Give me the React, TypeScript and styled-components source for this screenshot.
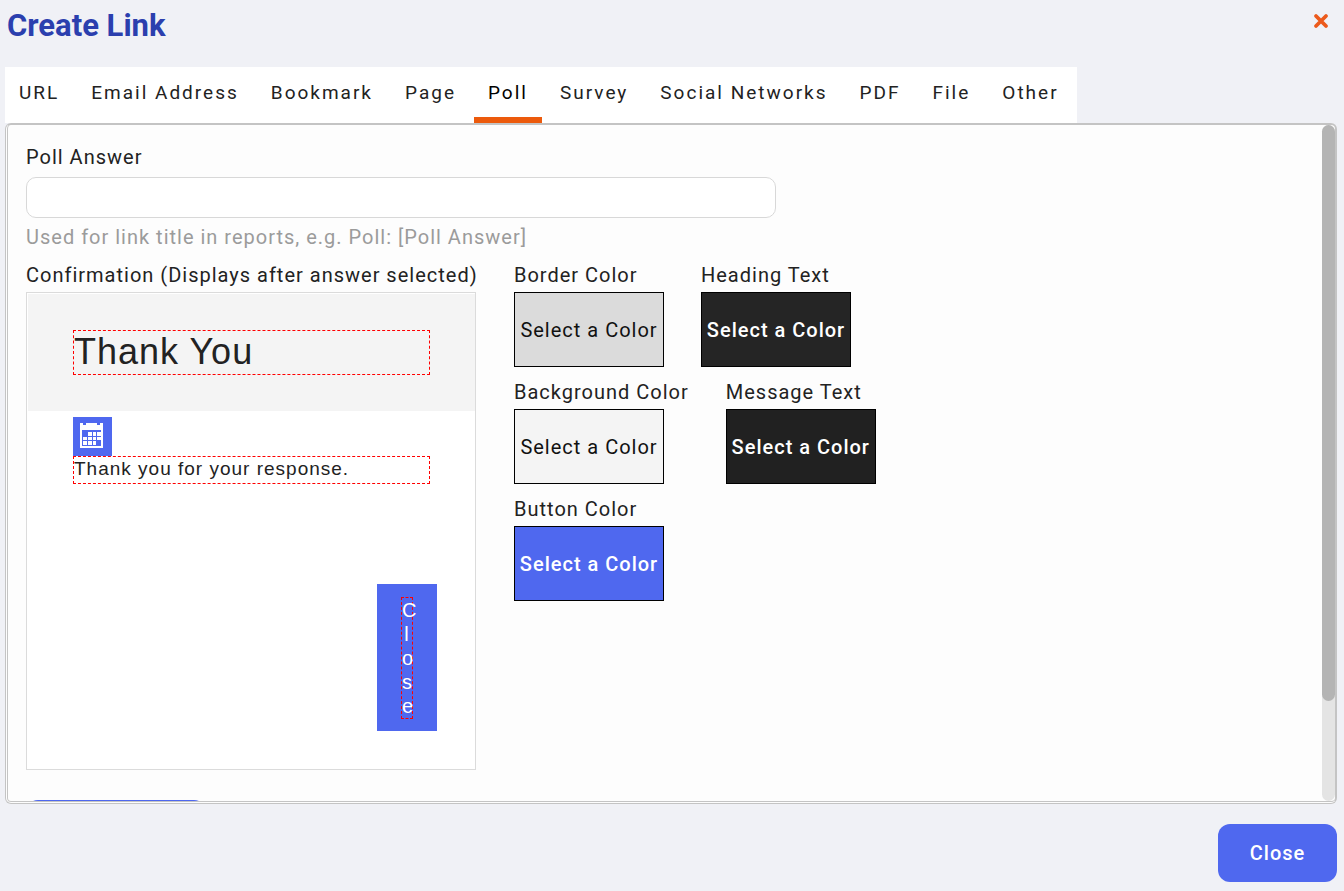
import React, { useEffect, useRef, useState } from "react";
import styled, { createGlobalStyle } from "styled-components";

const sans = `Roboto, "Liberation Sans", sans-serif`;
const arial = `"Liberation Sans", Arial, sans-serif`;
const blue = "#4f68ef";

const GlobalStyle = createGlobalStyle`
  *, *::before, *::after { box-sizing: border-box; }
  body { margin: 0; background: #f0f1f6; color: #222; font: 400 20px/24px ${sans}; letter-spacing: 1px; }
  button, input { font: inherit; letter-spacing: inherit; color: inherit; }
  button { cursor: pointer; }
`;

const Dialog = styled.main`
  display: flex;
  flex-direction: column;
  height: 100vh;
  padding: 6px 7px 9px 5px;
`;

const Header = styled.header`
  display: flex;
  justify-content: space-between;
  align-items: flex-start;
  height: 61px;
  flex: none;
  padding: 0 6px 0 2px;
`;

const Title = styled.h1`
  margin: 0;
  font-size: 31px;
  line-height: 40px;
  font-weight: 700;
  letter-spacing: 0;
  color: #2b3fae;
`;

const DismissButton = styled.button`
  display: flex;
  padding: 5px 0;
  border: 0;
  background: none;
`;

const TabList = styled.div`
  display: flex;
  flex: none;
  align-self: flex-start;
  gap: 4px;
  height: 56px;
  padding-right: 4px;
  background: #fff;
`;

const Tab = styled.button<{ $active: boolean }>`
  padding: 1px 14px 0;
  border: 0;
  border-bottom: 6px solid ${(p) => (p.$active ? "#ec5a0c" : "transparent")};
  background: none;
  color: ${(p) => (p.$active ? "#000" : "#222")};
  font-size: 19px;
  letter-spacing: 2px;
  white-space: nowrap;
`;

const Panel = styled.section`
  display: flex;
  flex: 1;
  min-height: 0;
  border: 3px double #c4c4c4;
  border-top-width: 2px;
  border-right-width: 2px;
  border-radius: 6px;
  background: #fdfdfd;
  overflow: hidden;
`;

const ScrollArea = styled.div`
  flex: 1;
  min-width: 0;
  overflow-y: auto;
  scrollbar-width: none;
  padding: 20px 18px 60px;
`;

const Track = styled.div`
  flex: none;
  width: 13px;
  border-radius: 7px;
  background: #e4e4e4;
`;

const Thumb = styled.div`
  border-radius: 7px;
  background: #b4b4b4;
`;

const Label = styled.label`
  display: block;
  white-space: nowrap;
`;

const TextInput = styled.input`
  display: block;
  width: 750px;
  max-width: 100%;
  height: 41px;
  margin: 8px 0 7px;
  padding: 0 12px;
  border: 1px solid #d8d8d8;
  border-radius: 10px;
  background: #fff;
`;

const Hint = styled.p`
  margin: 0 0 14px;
  color: #9b9b9b;
`;

const Columns = styled.div`
  display: flex;
  gap: 38px;
`;

const PreviewColumn = styled.div`
  flex: none;
  width: 450px;
`;

const Preview = styled.div`
  height: 478px;
  margin-top: 5px;
  border: 1px solid #dbdbdb;
  background: #fff;
  font-family: ${arial};
`;

const PreviewHead = styled.div`
  height: 117px;
  margin: 1px 0 6px 1px;
  padding: 36px 45px;
  background: #f4f4f4;
`;

const EditableHeading = styled.h2`
  margin: 0;
  border: 1px dashed #f00;
  height: 45px;
  font-size: 36px;
  line-height: 41px;
  font-weight: 400;
`;

const IconTile = styled.div`
  display: flex;
  justify-content: center;
  width: 39px;
  height: 39px;
  padding: 5px 2px 0 0;
  margin-left: 46px;
  background: ${blue};
`;

const EditableText = styled.p`
  margin: 0 45px 100px 46px;
  border: 1px dashed #f00;
  height: 28px;
  font-size: 19px;
`;

const PreviewButton = styled.button`
  display: block;
  width: 60px;
  height: 147px;
  margin: 0 38px 0 auto;
  padding: 0 24px;
  border: 0;
  background: ${blue};
  color: #fff;
`;

const EditableLetters = styled.span`
  display: block;
  width: 12px;
  border: 1px dashed #f00;
  text-align: center;
  word-break: break-all;
`;

const Swatches = styled.div`
  display: flex;
  flex-direction: column;
  gap: 13px;
`;

const SwatchRow = styled.div`
  display: flex;
  gap: 37px;
`;

const SwatchCell = styled.div`
  min-width: 150px;
`;

const SwatchButton = styled.button<{ $fill: string; $light: boolean }>`
  display: block;
  width: 150px;
  height: 75px;
  margin-top: 5px;
  padding: 0;
  border: 1px solid #000;
  background: ${(p) => p.$fill};
  color: ${(p) => (p.$light ? "#fff" : "#111")};
  font-weight: ${(p) => (p.$light ? 500 : 400)};
  white-space: nowrap;
`;

const SaveButton = styled.button`
  display: block;
  width: 180px;
  height: 58px;
  margin-top: 30px;
  border: 0;
  border-radius: 12px;
  background: ${blue};
  color: #fff;
`;

const Footer = styled.footer`
  display: flex;
  justify-content: flex-end;
  flex: none;
  padding-top: 20px;
`;

const CloseButton = styled.button`
  width: 119px;
  height: 58px;
  border: 0;
  border-radius: 12px;
  background: ${blue};
  color: #fff;
  font-weight: 500;
`;

const tabs = ["URL", "Email Address", "Bookmark", "Page", "Poll", "Survey", "Social Networks", "PDF", "File", "Other"];

const swatchRows = [
  [
    { id: "border", label: "Border Color", fill: "#dbdbdb", light: false },
    { id: "heading", label: "Heading Text", fill: "#252525", light: true },
  ],
  [
    { id: "background", label: "Background Color", fill: "#f4f4f4", light: false },
    { id: "message", label: "Message Text", fill: "#212121", light: true },
  ],
  [{ id: "button", label: "Button Color", fill: blue, light: true }],
];

const CloseIcon = () => (
  <svg width="20" height="20" viewBox="0 0 20 20" aria-hidden="true">
    <path d="M5 5L15 15M15 5L5 15" stroke="#ec5a1c" strokeWidth="3.8" strokeLinecap="round" />
  </svg>
);

const CalendarIcon = () => (
  <svg width="25" height="27" viewBox="0 0 25 27" fill="#fff" aria-hidden="true">
    <path d="M1 1h3v2h3V1h11v2h3V1h3v25H1zM3 8v16h19V8z" fillRule="evenodd" />
    <path d="M9 10h4v4H9zM14 10h3v4h-3zM18 10h4v4h-4zM4 15h4v3H4zM9 15h4v3H9zM14 15h3v3h-3zM18 15h4v3h-4zM4 19h4v4H4zM9 19h4v4H9zM14 19h3v4h-3z" />
  </svg>
);

export default function App() {
  const [active, setActive] = useState("Poll");
  const area = useRef<HTMLDivElement>(null);
  const [thumb, setThumb] = useState({ size: 85, top: 0 });

  const measure = () => {
    const el = area.current;
    if (!el) return;
    setThumb({
      size: (el.clientHeight / el.scrollHeight) * 100,
      top: (el.scrollTop / el.scrollHeight) * el.clientHeight,
    });
  };

  useEffect(() => {
    measure();
    window.addEventListener("resize", measure);
    return () => window.removeEventListener("resize", measure);
  }, []);

  return (
    <>
      <GlobalStyle />
      <Dialog>
        <Header>
          <Title>Create Link</Title>
          <DismissButton type="button" aria-label="Dismiss">
            <CloseIcon />
          </DismissButton>
        </Header>
        <TabList role="tablist">
          {tabs.map((name) => (
            <Tab
              key={name}
              type="button"
              role="tab"
              aria-selected={name === active}
              $active={name === active}
              onClick={() => setActive(name)}
            >
              {name}
            </Tab>
          ))}
        </TabList>
        <Panel>
          <ScrollArea ref={area} onScroll={measure}>
            <Label htmlFor="answer">Poll Answer</Label>
            <TextInput id="answer" type="text" />
            <Hint>Used for link title in reports, e.g. Poll: [Poll Answer]</Hint>
            <Columns>
              <PreviewColumn>
                <Label as="div">Confirmation (Displays after answer selected)</Label>
                <Preview>
                  <PreviewHead>
                    <EditableHeading>Thank You</EditableHeading>
                  </PreviewHead>
                  <IconTile>
                    <CalendarIcon />
                  </IconTile>
                  <EditableText>Thank you for your response.</EditableText>
                  <PreviewButton type="button">
                    <EditableLetters>Close</EditableLetters>
                  </PreviewButton>
                </Preview>
              </PreviewColumn>
              <Swatches>
                {swatchRows.map((row) => (
                  <SwatchRow key={row[0].id}>
                    {row.map((s) => (
                      <SwatchCell key={s.id}>
                        <Label htmlFor={s.id}>{s.label}</Label>
                        <SwatchButton id={s.id} type="button" $fill={s.fill} $light={s.light}>
                          Select a Color
                        </SwatchButton>
                      </SwatchCell>
                    ))}
                  </SwatchRow>
                ))}
              </Swatches>
            </Columns>
            <SaveButton type="button" aria-label="Save" />
          </ScrollArea>
          <Track>
            <Thumb style={{ height: `${thumb.size}%`, marginTop: thumb.top }} />
          </Track>
        </Panel>
        <Footer>
          <CloseButton type="button">Close</CloseButton>
        </Footer>
      </Dialog>
    </>
  );
}
